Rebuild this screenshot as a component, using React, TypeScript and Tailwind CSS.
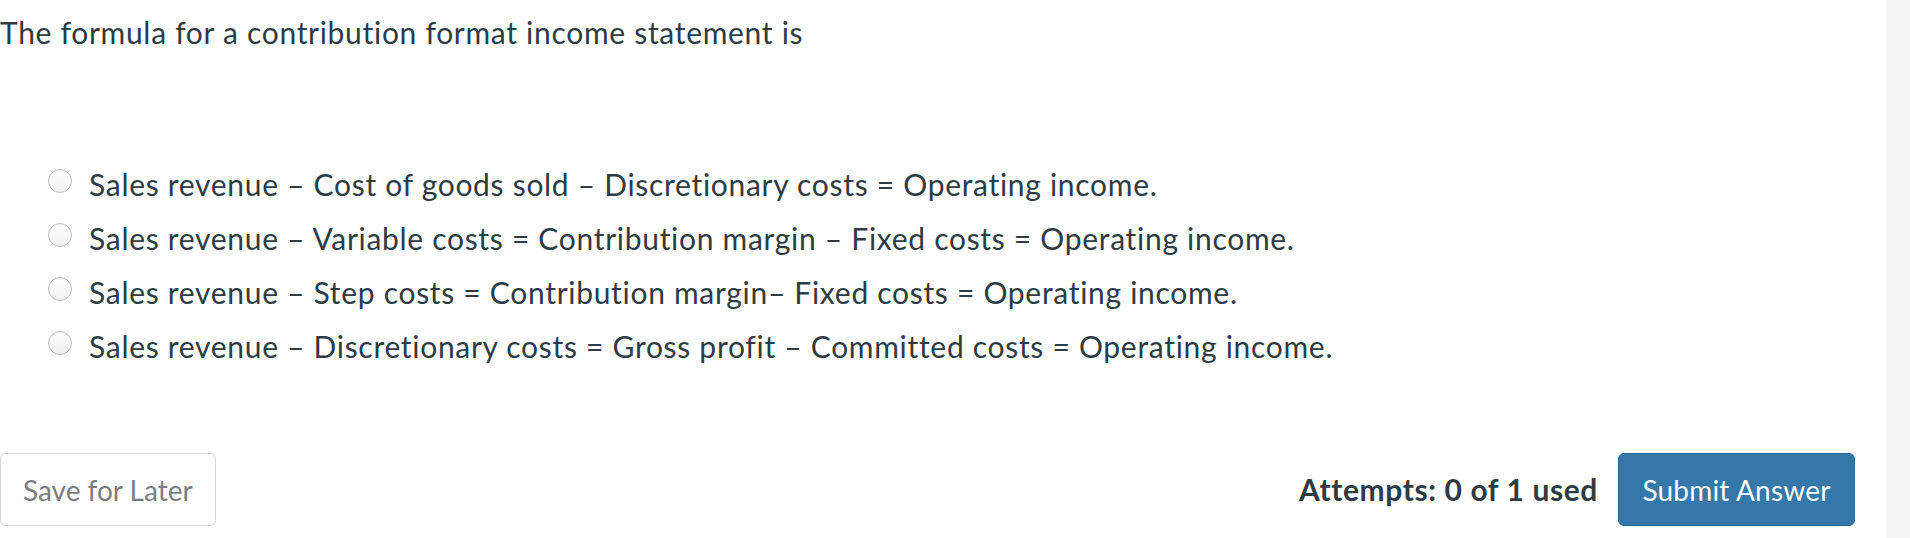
const options = [
  'Sales revenue – Cost of goods sold – Discretionary costs = Operating income.',
  'Sales revenue – Variable costs = Contribution margin – Fixed costs = Operating income.',
  'Sales revenue – Step costs = Contribution margin– Fixed costs = Operating income.',
  'Sales revenue – Discretionary costs = Gross profit – Committed costs = Operating income.',
]

function Radio() {
  return (
    <span className="mt-[12px] block h-[24px] w-[24px] shrink-0 rounded-full border border-[#bdbdbd] bg-gradient-to-b from-white to-[#f0f0f0] shadow-[inset_0_1px_1px_rgba(0,0,0,0.06)]" />
  )
}

export default function App() {
  return (
    <div className="flex h-[538px] w-full overflow-hidden bg-white font-['Lato','Liberation_Sans',sans-serif] text-[#2d3b45] [font-variant-ligatures:no-common-ligatures]">
      <div className="flex flex-1 flex-col pr-[31px] pt-[10px]">
        <p className="text-[30px] leading-[1.5] tracking-[0.7px]">The formula for a contribution format income statement is</p>

        <div className="mt-[102px] flex flex-col pl-[48px]">
          {options.map((opt) => (
            <label key={opt} className="flex h-[54px] items-start gap-[17px]">
              <Radio />
              <span className="text-[30px] leading-[54px] tracking-[0.7px]">{opt}</span>
            </label>
          ))}
        </div>

        <div className="mt-[80px] flex items-center justify-between">
          <button className="h-[73px] rounded-[6px] border border-[#d6d6d6] bg-white px-[22px] text-[28px] text-[#7a7e82]">
            Save for Later
          </button>
          <div className="flex items-center gap-[20px]">
            <span className="text-[30px] font-bold tracking-[0.6px]">Attempts: 0 of 1 used</span>
            <button className="h-[73px] w-[237px] rounded-[6px] border border-[#2b6690] bg-[#3577a8] text-[28px] tracking-[0.2px] text-white">
              Submit Answer
            </button>
          </div>
        </div>
      </div>
      <div className="w-[24px] shrink-0 bg-[#f5f5f5]" />
    </div>
  )
}
